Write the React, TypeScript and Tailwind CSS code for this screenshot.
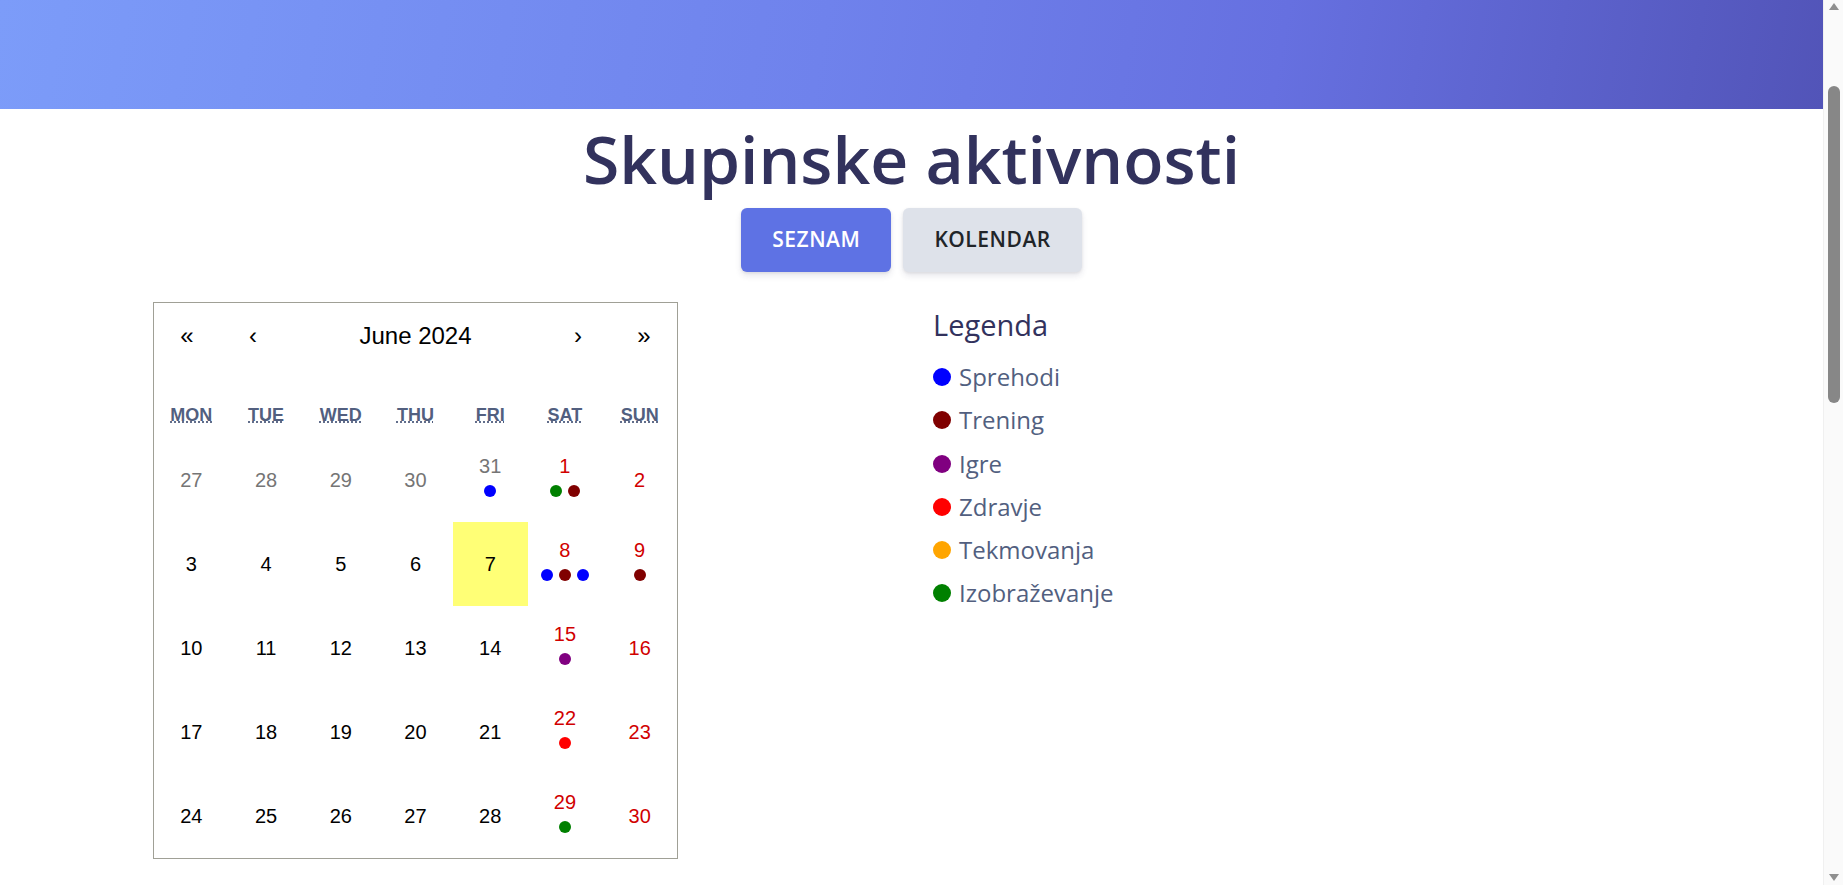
import React from "react";

type Day = { n: number; muted?: boolean; weekend?: boolean; today?: boolean; dots?: string[] };

const BLUE = "#0000ff";
const MAROON = "#800000";
const PURPLE = "#800080";
const RED = "#ff0000";
const ORANGE = "#ffa500";
const GREEN = "#008000";

const WEEKDAYS = [
  { short: "Mon", long: "Monday" },
  { short: "Tue", long: "Tuesday" },
  { short: "Wed", long: "Wednesday" },
  { short: "Thu", long: "Thursday" },
  { short: "Fri", long: "Friday" },
  { short: "Sat", long: "Saturday" },
  { short: "Sun", long: "Sunday" },
];

const WEEKS: Day[][] = [
  [
    { n: 27, muted: true },
    { n: 28, muted: true },
    { n: 29, muted: true },
    { n: 30, muted: true },
    { n: 31, muted: true, dots: [BLUE] },
    { n: 1, weekend: true, dots: [GREEN, MAROON] },
    { n: 2, weekend: true },
  ],
  [
    { n: 3 },
    { n: 4 },
    { n: 5 },
    { n: 6 },
    { n: 7, today: true },
    { n: 8, weekend: true, dots: [BLUE, MAROON, BLUE] },
    { n: 9, weekend: true, dots: [MAROON] },
  ],
  [
    { n: 10 },
    { n: 11 },
    { n: 12 },
    { n: 13 },
    { n: 14 },
    { n: 15, weekend: true, dots: [PURPLE] },
    { n: 16, weekend: true },
  ],
  [
    { n: 17 },
    { n: 18 },
    { n: 19 },
    { n: 20 },
    { n: 21 },
    { n: 22, weekend: true, dots: [RED] },
    { n: 23, weekend: true },
  ],
  [
    { n: 24 },
    { n: 25 },
    { n: 26 },
    { n: 27 },
    { n: 28 },
    { n: 29, weekend: true, dots: [GREEN] },
    { n: 30, weekend: true },
  ],
];

const LEGEND = [
  { label: "Sprehodi", color: BLUE },
  { label: "Trening", color: MAROON },
  { label: "Igre", color: PURPLE },
  { label: "Zdravje", color: RED },
  { label: "Tekmovanja", color: ORANGE },
  { label: "Izobraževanje", color: GREEN },
];

function Tile({ day }: { day: Day }) {
  const hasDots = Boolean(day.dots && day.dots.length);
  const color = day.muted ? "text-[#757575]" : day.weekend ? "text-[#d10000]" : "text-black";
  return (
    <div
      className={`flex h-[84px] flex-col items-center ${hasDots ? "pt-[18px]" : "pt-[32px]"} ${
        day.today ? "bg-[#ffff76]" : ""
      }`}
    >
      <span className={`text-[20px] leading-[20px] ${color}`}>{day.n}</span>
      {hasDots && (
        <div className="mt-[9px] flex gap-[6px]">
          {day.dots!.map((c, i) => (
            <span key={i} className="h-3 w-3 rounded-full" style={{ backgroundColor: c }} />
          ))}
        </div>
      )}
    </div>
  );
}

function Calendar() {
  return (
    <div className="w-[525px] shrink-0 border border-[#a0a096] bg-white font-['Liberation_Sans',Arial,sans-serif] text-[24px] leading-[1.125em]">
      <div className="flex h-[64px] items-center">
        <button className="h-full w-[66px] text-[24px] text-black">«</button>
        <button className="h-full w-[66px] text-[24px] text-black">‹</button>
        <span className="flex-1 text-center text-[24px] text-black">June 2024</span>
        <button className="h-full w-[66px] text-[24px] text-black">›</button>
        <button className="h-full w-[66px] text-[24px] text-black">»</button>
      </div>
      <div className="mt-[25px] grid h-[46px] grid-cols-7 items-center">
        {WEEKDAYS.map((w) => (
          <div key={w.short} className="text-center text-[18px] font-bold uppercase text-[#525f7f]">
            <abbr title={w.long} className="underline decoration-dotted">
              {w.short}
            </abbr>
          </div>
        ))}
      </div>
      <div className="grid grid-cols-7">
        {WEEKS.flat().map((d, i) => (
          <Tile key={i} day={d} />
        ))}
      </div>
    </div>
  );
}

function Legend() {
  return (
    <div className="ml-[255px] pt-[5px] font-['Open_Sans',sans-serif]">
      <h3 className="text-[29px] leading-[35px] font-normal text-[#32325d]">Legenda</h3>
      <ul className="mt-[13px] flex flex-col">
        {LEGEND.map((item) => (
          <li key={item.label} className="flex h-[43.33px] items-center gap-[8px]">
            <span className="h-[18px] w-[18px] rounded-full" style={{ backgroundColor: item.color }} />
            <span className="text-[24px] leading-[36px] text-[#525f7f]">{item.label}</span>
          </li>
        ))}
      </ul>
    </div>
  );
}

// the page in the shot is taller than the window, so the browser scrollbar shows on the right
function ScrollbarTrack() {
  return (
    <div className="flex h-[885px] w-[20px] shrink-0 flex-col items-center border-l border-[#f0f0f0] bg-[#fafafa]">
      <svg width="10" height="7" viewBox="0 0 10 7" className="mt-[3px]">
        <path d="M5 0 L10 7 L0 7 Z" fill="#8f8f8f" />
      </svg>
      <div className="mt-[76px] h-[317px] w-[12px] rounded-full bg-[#878787]" />
      <div className="flex-1" />
      <svg width="10" height="7" viewBox="0 0 10 7" className="mb-[4px]">
        <path d="M0 0 L10 0 L5 7 Z" fill="#8f8f8f" />
      </svg>
    </div>
  );
}

export default function App() {
  return (
    <div className="flex h-[885px] overflow-hidden bg-white font-['Open_Sans',sans-serif]">
      <main className="min-w-0 flex-1">
        <header className="h-[109px] bg-[linear-gradient(100deg,#7c9cf9_0%,#6f82ec_45%,#6670e0_70%,#5254b8_100%)]" />
        <h1 className="mt-[10px] text-center text-[66px] leading-[1.2] font-semibold text-[#32325d]">
          Skupinske aktivnosti
        </h1>
        <div className="mt-[10px] flex justify-center gap-[12px]">
          <button className="h-[64px] rounded-[6px] bg-[#5e72e4] px-[31px] text-[21px] font-semibold tracking-[0.025em] text-white shadow-[0_4px_6px_rgba(50,50,93,0.11),0_1px_3px_rgba(0,0,0,0.08)]">
            SEZNAM
          </button>
          <button className="h-[64px] rounded-[6px] bg-[#dee2ea] px-[31px] text-[21px] font-semibold tracking-[0.025em] text-[#212529] shadow-[0_4px_6px_rgba(50,50,93,0.11),0_1px_3px_rgba(0,0,0,0.08)]">
            KOLENDAR
          </button>
        </div>
        <div className="mt-[30px] flex items-start pl-[153px]">
          <Calendar />
          <Legend />
        </div>
      </main>
      <ScrollbarTrack />
    </div>
  );
}
